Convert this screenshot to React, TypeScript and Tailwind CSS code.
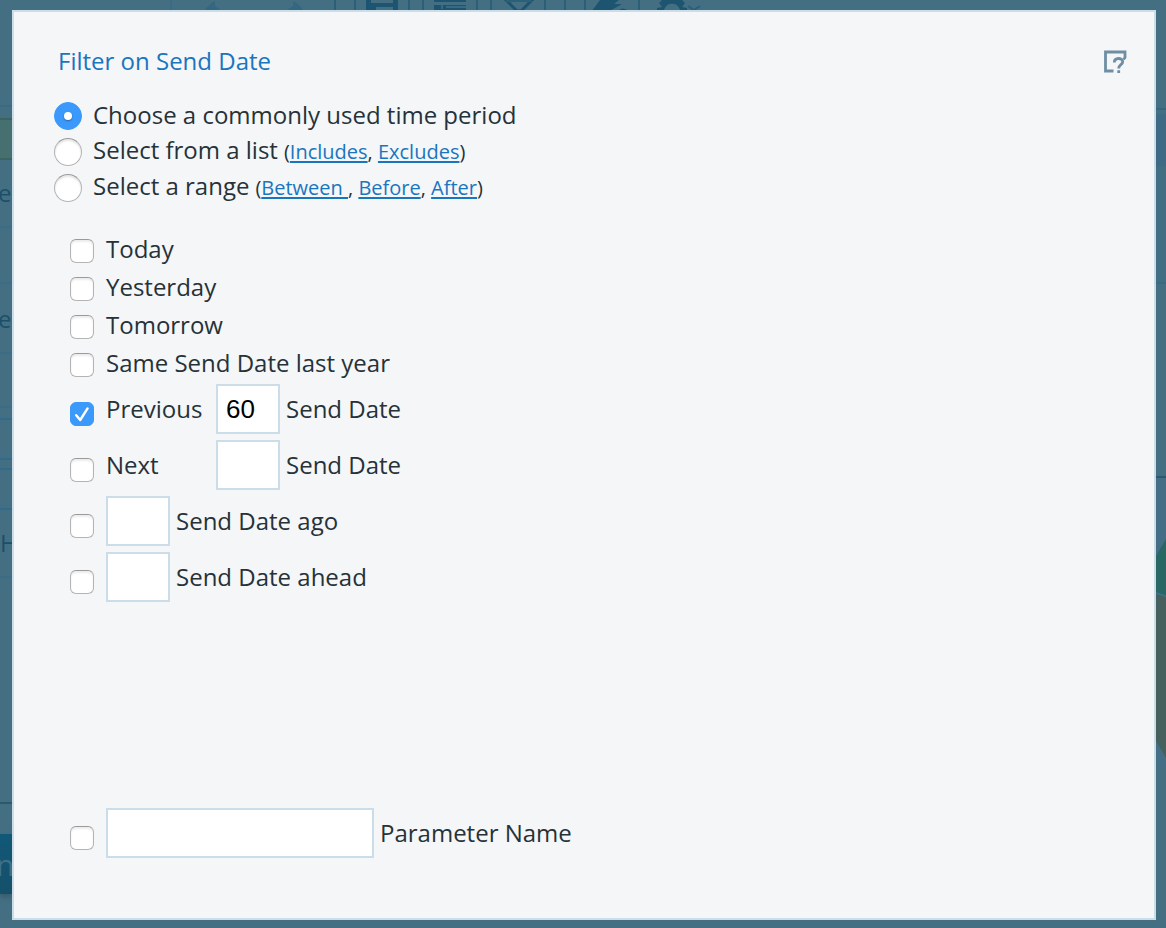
import React from "react";

const CHECKBOX =
  "peer block size-6 appearance-none rounded-[6px] border border-[#b4b4b4] border-t-[#9a9a9a] bg-white shadow-[inset_0_2px_2px_rgba(0,0,0,0.08)] checked:border-[#3b99fc] checked:bg-[#3b99fc] checked:shadow-none";
const FIELD =
  "h-[50px] border-2 border-[#cbdde8] bg-white px-2 font-['Liberation_Sans',Arial,sans-serif] text-[26px] text-black outline-none";

function Check({ id, checked, label }: { id: string; checked?: boolean; label?: string }) {
  return (
    <span className="relative mr-3 block size-6 shrink-0">
      <input id={id} type="checkbox" defaultChecked={checked} aria-label={label} className={CHECKBOX} />
      <svg
        viewBox="0 0 24 24"
        aria-hidden="true"
        className="pointer-events-none absolute inset-0 hidden size-6 peer-checked:block"
      >
        <path d="M6.2 13.2 10.2 18 17.6 6.4" fill="none" stroke="#fff" strokeWidth="2.4" strokeLinecap="round" strokeLinejoin="round" />
      </svg>
    </span>
  );
}

function Radio({ id, checked, children }: { id: string; checked?: boolean; children: React.ReactNode }) {
  return (
    <div className="flex h-9 items-center">
      <span className="relative mr-[11px] block size-7 shrink-0">
        <input
          id={id}
          type="radio"
          name="mode"
          defaultChecked={checked}
          className="peer block size-7 appearance-none rounded-full border border-[#b4b4b4] border-t-[#9a9a9a] bg-white shadow-[inset_0_2px_2px_rgba(0,0,0,0.1)] checked:border-[#3b99fc] checked:bg-[#3b99fc] checked:shadow-none"
        />
        <span className="pointer-events-none absolute top-[10px] left-[10px] hidden size-2 rounded-full bg-white shadow-[0_1px_2px_rgba(0,0,0,0.35)] peer-checked:block" />
      </span>
      <div className="flex items-baseline pb-[2px]">{children}</div>
    </div>
  );
}

function Link({ children }: { children: React.ReactNode }) {
  return (
    <a href="#" className="text-[#1a75bf] underline decoration-2 underline-offset-2">
      {children}
    </a>
  );
}

function SimpleRow({ id, text }: { id: string; text: string }) {
  return (
    <div className="flex h-[38px] items-center">
      <div className="pt-1">
        <Check id={id} />
      </div>
      <label htmlFor={id}>{text}</label>
    </div>
  );
}

function FieldRow({
  id,
  before,
  after,
  value,
  checked,
  wide,
}: {
  id: string;
  before?: string;
  after: string;
  value?: string;
  checked?: boolean;
  wide?: boolean;
}) {
  return (
    <div className="flex h-14 items-center">
      <div className="pt-[10px]">
        <Check id={id} checked={checked} label={before ? undefined : after} />
      </div>
      {before && (
        <label htmlFor={id} className="w-[110px]">
          {before}
        </label>
      )}
      <input
        id={`${id}-value`}
        type="text"
        defaultValue={value}
        className={wide ? `${FIELD} w-[268px]` : `${FIELD} w-16`}
      />
      <label htmlFor={`${id}-value`} className="ml-[6px]">
        {after}
      </label>
    </div>
  );
}

function Backdrop() {
  return (
    <div aria-hidden="true" className="absolute inset-0 overflow-hidden">
      <div className="flex h-full">
        <div className="w-3 shrink-0 text-2xl leading-9 text-[#1d5068]">
          <div className="h-[107px] border-b-2 border-[#3c6a83]" />
          <div className="h-[11px]" />
          <div className="h-[42px] border-y-2 border-[#3b6460] bg-[#45706f]" />
          <div className="h-[68px] border-b-2 border-[#3d6c87] pt-[15px]">
            <span className="-ml-[2px]">e</span>
          </div>
          <div className="h-14 border-b-2 border-[#3d6c87]" />
          <div className="h-[70px] border-b-2 border-[#3d6c87] pt-[17px]">
            <span className="-ml-[2px]">e</span>
          </div>
          <div className="h-[54px] border-b-2 border-[#3d6c87]" />
          <div className="mt-[10px] h-[42px] border-y-2 border-[#2f6b8a]" />
          <div className="mt-2 h-[42px] border-y-2 border-[#2f6b8a]" />
          <div className="h-[68px] border-b-2 border-[#3d6c87] pt-[15px]">H</div>
          <div className="h-[226px] border-b-2 border-[#2b5a70]" />
          <div className="mt-[30px] h-[60px] bg-gradient-to-b from-[#115878] to-[#155069] pt-[13px] text-[30px] text-[#3f7088] shadow-[0_3px_5px_rgba(40,60,70,0.4)]">
            <span className="-ml-1">n</span>
          </div>
        </div>
        <div className="min-w-0 flex-1 overflow-hidden">
          <svg className="block h-3 w-[720px]" viewBox="0 0 720 12" fill="none">
            <path d="M159 0V12" stroke="#3b6c87" strokeWidth="2" />
            <path d="M192 12C194 7 199 3 203 1V6L208 9 204 12ZM292 12C290 7 285 3 281 1V6L276 9 280 12Z" fill="#346882" />
            <path d="M323 0V12M343 0V12M397 0V12M411 0V12M465 0V12M479 0V12M533 0V12M553 0V12M573 0V12M627 0V12" stroke="#2c6079" strokeWidth="2" />
            <path d="M354 0H359V3H381V0H386V12H381V7H364V12H354Z" fill="#1d5570" />
            <path d="M422 0H454V2H422ZM422 5H454V12H422Z" fill="#1d5570" />
            <path d="M430 5V9M434 7H454" stroke="#386a82" strokeWidth="2" />
            <path d="M492 -2 505 11H509L522 -2" stroke="#1d5570" strokeWidth="3" />
            <path d="M494 1H520" stroke="#2c6079" strokeWidth="2" />
            <path d="M588 0H607L602 4H610L596 12H579ZM604 12Q611 5 618 12Z" fill="#1d5570" />
            <path d="M645 12V8L650 7 647 3 650 0H670L673 3 670 7 675 8V12H668A8 8 0 0 0 652 12Z" fill="#1d5570" />
            <path d="M653 8A8 8 0 0 1 667 8L669 12H651Z" fill="#446f83" />
            <path d="M676 6 682 10 688 6" stroke="#2c6079" strokeWidth="2" />
          </svg>
        </div>
        <div className="w-[10px] shrink-0">
          <div className="h-[110px] border-b-2 border-[#35677f]" />
          <div className="mt-1 h-[52px] bg-[#3f6a86]" />
          <div className="h-[118px] border-b-2 border-[#386a82] bg-[#426e84]" />
          <div className="h-[194px] border-b-2 border-[#2b5a70]" />
          <svg className="block h-[290px] w-[10px]" viewBox="0 478 10 290">
            <path d="M0 478H10V768H0Z" fill="#446e86" />
            <path d="M0 556 10 539V596L0 592Z" fill="#286763" />
            <path d="M0 594 10 597V758L0 741Z" fill="#46605d" />
            <path d="M0 593 10 596" stroke="#3c708a" strokeWidth="1.4" />
          </svg>
        </div>
      </div>
    </div>
  );
}

export default function App() {
  return (
    <div className="relative flex min-h-screen bg-[#446f83] pt-[10px] pr-[10px] pb-2 pl-3 font-['Open_Sans',sans-serif] text-2xl leading-9 text-[#263238]">
      <Backdrop />
      <main
        role="dialog"
        aria-labelledby="title"
        className="relative flex-1 border-2 border-[#cbdde8] bg-[#f4f6f8] pt-[31px] pr-[27px] pb-14 pl-10"
      >
        <header className="flex items-center justify-between pl-1">
          <h1 id="title" className="text-[#1a75bf]">
            Filter on Send Date
          </h1>
          <button type="button" aria-label="Help" className="size-6">
            <svg viewBox="0 0 24 24" className="size-6" fill="none" stroke="#6f8ea4" strokeWidth="2.8">
              <path d="M10.500 22H2.500V3H22V8.500L20.500 10.500" />
              <path d="M11.300 13.500C11.300 8.300 19.700 8.300 19.700 12.800C19.700 15.800 15.700 15.600 15.700 19.500M15.700 21.200V24" />
            </svg>
          </button>
        </header>

        <div className="mt-[19px]">
          <Radio id="common" checked>
            <label htmlFor="common">Choose a commonly used time period</label>
          </Radio>
          <Radio id="list">
            <label htmlFor="list">Select from a list</label>
            <span className="ml-[6px] text-xl leading-9">
              (<Link>Includes</Link>, <Link>Excludes</Link>)
            </span>
          </Radio>
          <Radio id="range">
            <label htmlFor="range">Select a range</label>
            <span className="ml-[6px] text-xl leading-9">
              (<Link>Between&nbsp;</Link>, <Link>Before</Link>, <Link>After</Link>)
            </span>
          </Radio>
        </div>

        <div className="mt-6 pl-4">
          <SimpleRow id="today" text="Today" />
          <SimpleRow id="yesterday" text="Yesterday" />
          <SimpleRow id="tomorrow" text="Tomorrow" />
          <SimpleRow id="last-year" text="Same Send Date last year" />
          <div className="-mt-px">
            <FieldRow id="previous" before="Previous" after="Send Date" value="60" checked />
            <FieldRow id="next" before="Next" after="Send Date" />
            <FieldRow id="ago" after="Send Date ago" />
            <FieldRow id="ahead" after="Send Date ahead" />
          </div>
          <div className="mt-[200px]">
            <FieldRow id="parameter" after="Parameter Name" wide />
          </div>
        </div>
      </main>
    </div>
  );
}
